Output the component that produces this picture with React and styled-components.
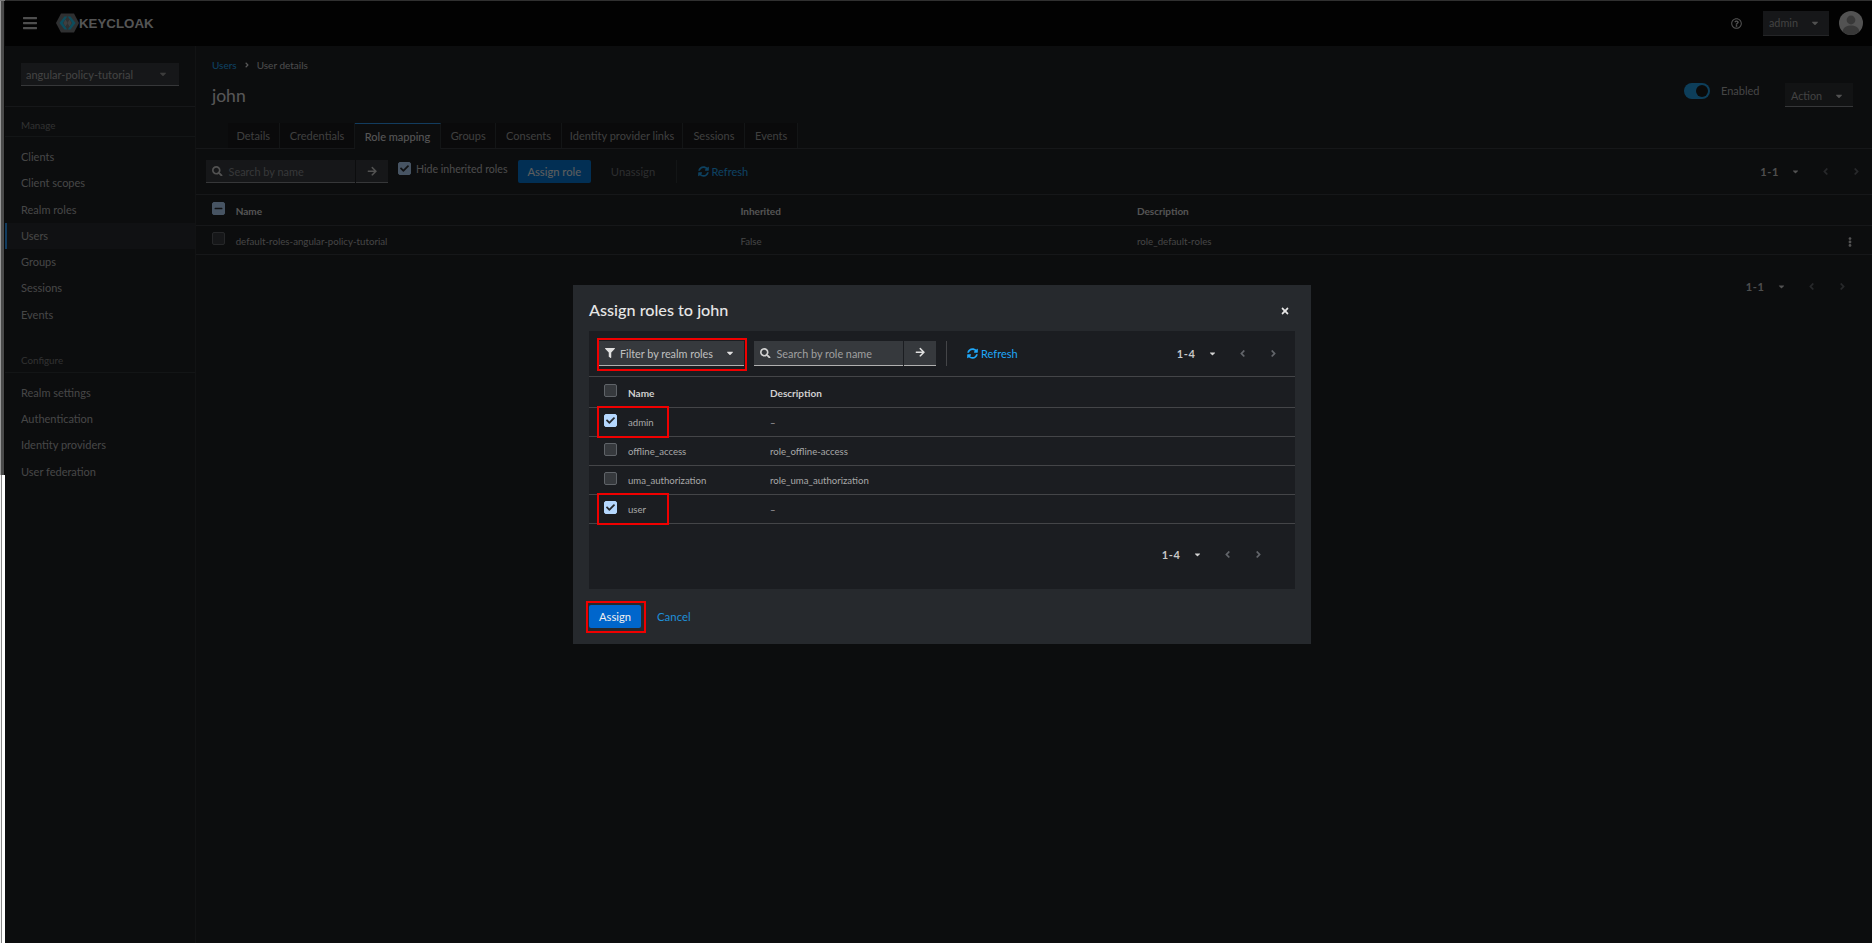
import React from "react";
import styled, { createGlobalStyle } from "styled-components";
import {
  FaAngleLeft,
  FaAngleRight,
  FaArrowRight,
  FaBars,
  FaCaretDown,
  FaCheck,
  FaEllipsisV,
  FaFilter,
  FaMinus,
  FaRegQuestionCircle,
  FaSearch,
  FaSyncAlt,
  FaTimes,
} from "react-icons/fa";

const manageItems = ["Clients", "Client scopes", "Realm roles", "Users", "Groups", "Sessions", "Events"];
const configureItems = ["Realm settings", "Authentication", "Identity providers", "User federation"];
const tabs = [
  { label: "Details", width: 52.4 },
  { label: "Credentials", width: 75 },
  { label: "Role mapping", width: 86, active: true },
  { label: "Groups", width: 55.4 },
  { label: "Consents", width: 65.3 },
  { label: "Identity provider links", width: 121.8 },
  { label: "Sessions", width: 62 },
  { label: "Events", width: 52.5 },
];
const roles = [
  { name: "admin", description: "–", checked: true },
  { name: "offline_access", description: "role_offline-access" },
  { name: "uma_authorization", description: "role_uma_authorization" },
  { name: "user", description: "–", checked: true },
];

const GlobalStyle = createGlobalStyle`
  html, body {
    margin: 0;
    padding: 0;
    height: 100%;
    overflow: hidden;
    background: #030303;
  }
  body {
    font-family: Lato, "Noto Sans", "Liberation Sans", sans-serif;
    white-space: nowrap;
  }
  * {
    box-sizing: border-box;
  }
`;

const Page = styled.div`
  display: flex;
  width: 1872px;
  height: 943px;
`;

const Edge = styled.div`
  width: 5px;
  display: flex;
  flex-direction: column;
`;

const EdgeTop = styled.div`
  height: 475px;
  background: #4b4b4b;
  border-left: 1px solid #9a9a9a;
  border-right: 1px solid #0a0a0a;
`;

const EdgeBottom = styled.div`
  flex: 1;
  background: #ffffff;
  border-left: 1px solid #f5f5f5;
  box-shadow: inset 2px 0 0 -1px #8a8a8a;
`;

const Shell = styled.div`
  flex: 1;
  position: relative;
  display: flex;
  flex-direction: column;
  min-width: 0;
  background: #1b1d21;
  color: #e0e0e0;
`;

const TopLine = styled.div`
  height: 1px;
  background: #7a7a7a;
  position: absolute;
  top: 0;
  left: -5px;
  right: 0;
  z-index: 5;
`;

const Masthead = styled.header`
  height: 46px;
  background: #000;
  display: flex;
  align-items: center;
  padding-left: 17px;
  padding-right: 9px;
`;

const Burger = styled.span`
  display: flex;
  font-size: 16px;
  color: #c7c7c7;
  margin-right: 18px;
`;

const Brand = styled.span`
  display: flex;
  align-items: center;
`;

const BrandName = styled.span`
  font-family: "Liberation Sans", sans-serif;
  font-weight: 700;
  font-size: 13.3px;
  color: #d8d8d8;
`;

const MastTools = styled.div`
  margin-left: auto;
  display: flex;
  align-items: center;
`;

const HelpIcon = styled.span`
  display: flex;
  font-size: 11px;
  color: #d2d2d2;
  margin-right: 21px;
`;

const UserMenu = styled.div`
  width: 66px;
  height: 25px;
  background: #36393d;
  border-bottom: 1px solid #5a5d61;
  display: flex;
  align-items: center;
  padding-left: 6px;
  font-size: 10.8px;
  color: #a8a8a8;
  margin-right: 10px;

  svg {
    margin-left: 12px;
    font-size: 10px;
    color: #d0d0d0;
  }
`;

const Avatar = styled.svg`
  width: 24px;
  height: 24px;
`;

const Body = styled.div`
  flex: 1;
  display: flex;
  min-height: 0;
`;

const Sidebar = styled.aside`
  width: 191px;
  border-right: 1px solid #2a2d31;
  flex-shrink: 0;
`;

const RealmBox = styled.div`
  height: 61px;
  padding: 17px 16px 0;
  border-bottom: 1px solid #36393d;
`;

const RealmSelect = styled.div`
  height: 23px;
  background: #36393d;
  border-bottom: 1px solid #8a8d90;
  display: flex;
  align-items: center;
  justify-content: space-between;
  padding: 0 11px 0 5px;
  font-size: 11px;
  color: #acacac;

  svg {
    font-size: 10px;
    color: #9a9a9a;
  }
`;

const NavTitle = styled.div`
  height: 30px;
  margin-top: ${({ $first }) => ($first ? "0" : "15px")};
  padding: ${({ $first }) => ($first ? "12px" : "11px")} 16px 0;
  border-bottom: 1px solid #2f3236;
  font-size: 9.8px;
  line-height: 13px;
  color: #7d7d7d;
`;

const NavList = styled.div`
  padding-top: 7px;
`;

const NavItem = styled.div`
  height: 26.25px;
  line-height: 26px;
  padding-left: 16px;
  font-size: 11px;
  color: #b4b4b4;
  background: ${({ $active }) => ($active ? "#26292d" : "transparent")};
  box-shadow: ${({ $active }) => ($active ? "inset 2px 0 0 #2b9af3" : "none")};
`;

const Main = styled.main`
  flex: 1;
  min-width: 0;
`;

const PageHead = styled.div`
  padding: 11px 19px 0 16px;
`;

const Breadcrumb = styled.nav`
  height: 16px;
  display: flex;
  align-items: center;
  font-size: 10px;
  color: #c4c4c4;

  svg {
    font-size: 8px;
    margin: 0 6px;
    color: #e0e0e0;
  }
`;

const BreadLink = styled.span`
  color: #1fa7f8;
`;

const TitleRow = styled.div`
  margin-top: 10px;
  height: 24px;
  display: flex;
  justify-content: space-between;
  align-items: flex-start;
`;

const UserName = styled.h1`
  margin: 0;
  font-size: 17.5px;
  font-weight: 400;
  line-height: 26px;
  color: #e0e0e0;
`;

const HeadActions = styled.div`
  display: flex;
  align-items: flex-start;
`;

const Toggle = styled.span`
  width: 26px;
  height: 16px;
  border-radius: 8px;
  background: #1f9fe8;
  position: relative;
  margin-right: 11px;

  &::after {
    content: "";
    position: absolute;
    right: 2px;
    top: 2px;
    width: 12px;
    height: 12px;
    border-radius: 50%;
    background: #151515;
  }
`;

const ToggleLabel = styled.span`
  font-size: 11px;
  line-height: 16px;
  color: #b0b0b0;
  width: 64px;
`;

const ActionSelect = styled.div`
  width: 68px;
  height: 24px;
  background: #2a2d31;
  border-bottom: 1px solid #8a8d90;
  display: flex;
  align-items: center;
  padding: 2px 0 0 6px;
  font-size: 10.8px;
  color: #a8a8a8;

  svg {
    margin-left: 12px;
    font-size: 10px;
    color: #d0d0d0;
  }
`;

const Tabs = styled.div`
  margin-top: 16px;
  padding-left: 31.6px;
  height: 26px;
  display: flex;
  border-bottom: 1px solid #36393d;
`;

const Tab = styled.div`
  height: ${({ $active }) => ($active ? "26px" : "25px")};
  text-align: center;
  line-height: 25px;
  font-size: 11px;
  color: ${({ $active }) => ($active ? "#e0e0e0" : "#a0a0a0")};
  background: ${({ $active }) => ($active ? "#1b1d21" : "#151618")};
  border-right: 1px solid #2f3236;
  border-top: ${({ $active }) => ($active ? "1px solid #2b9af3" : "none")};
`;

const Toolbar = styled.div`
  height: 46px;
  display: flex;
  align-items: center;
  padding-left: 10px;
  border-bottom: 1px solid #36393d;
`;

const SearchBox = styled.div`
  width: 149px;
  height: 23px;
  background: #36393d;
  border-bottom: 1px solid #8a8d90;
  display: flex;
  align-items: center;
  padding-left: 6px;
  font-size: 10.9px;
  color: #8a8d90;

  svg {
    font-size: 10.5px;
    color: #d2d2d2;
    margin-right: 6px;
  }
`;

const SearchGo = styled.div`
  width: 32px;
  height: 23px;
  margin-left: 1px;
  background: #36393d;
  border-bottom: 1px solid #8a8d90;
  display: flex;
  align-items: center;
  justify-content: center;
  font-size: 10.5px;
  color: #d2d2d2;
`;

const Box = styled.span`
  width: 13px;
  height: 13px;
  flex-shrink: 0;
  border-radius: 2px;
  display: flex;
  align-items: center;
  justify-content: center;
  background: ${({ $on }) => ($on ? "#b5d8ff" : "#36393d")};
  border: 1px solid ${({ $on }) => ($on ? "#b5d8ff" : "#5f6368")};
  color: #26292d;
  font-size: 9px;
  margin-bottom: 3px;
`;

const HideInherited = styled.label`
  width: 110px;
  display: flex;
  align-items: flex-start;
  margin-left: 10px;
  margin-top: -5px;
  font-size: 10.6px;
  line-height: 15px;
  color: #c0c0c0;

  ${Box} {
    margin: 0 5px 0 0;
  }
`;

const PrimaryButton = styled.button`
  height: 23px;
  width: ${({ $width }) => $width}px;
  margin-left: ${({ $gap }) => $gap || 0}px;
  border: none;
  border-radius: 2px;
  padding: 0;
  background: ${({ $bright }) => ($bright ? "#0066cc" : "#0078d8")};
  color: #f0f0f0;
  font-family: inherit;
  font-size: 11.2px;
`;

const GhostButton = styled.button`
  height: 23px;
  width: 65px;
  margin-left: 10px;
  border: none;
  background: transparent;
  padding: 0;
  color: #6f7276;
  font-family: inherit;
  font-size: 11.2px;
`;

const VLine = styled.span`
  width: 1px;
  height: ${({ $tall }) => ($tall ? "25px" : "23px")};
  background: ${({ $tall }) => ($tall ? "#444548" : "#2f3236")};
  margin-left: 10px;
`;

const RefreshLink = styled.span`
  display: flex;
  align-items: center;
  gap: 3px;
  height: 25px;
  margin-left: ${({ $gap }) => $gap}px;
  font-size: 11px;
  color: #1fa7f8;

  svg {
    font-size: 11px;
  }
`;

const Pager = styled.div`
  margin-left: auto;
  padding-right: ${({ $right }) => $right || 0}px;
  display: flex;
  align-items: center;
  font-size: 11px;
  font-weight: 700;
  color: #c8c8c8;
`;

const PagerRange = styled.span`
  letter-spacing: 0.6px;
  margin-right: 12px;
`;

const PagerCaret = styled.span`
  display: flex;
  font-size: 9px;
  color: #d2d2d2;
  margin-right: 10px;
`;

const PagerArrow = styled.span`
  display: flex;
  justify-content: center;
  width: 31px;
  font-size: 11px;
  color: #62656a;
`;

const RoleRow = styled.div`
  display: grid;
  grid-template-columns: 23.7px 504.7px 396.6px 1fr 27px;
  align-items: center;
  height: ${({ $h }) => $h}px;
  padding-left: 16px;
  border-bottom: 1px solid #36393d;
  font-size: ${({ $head }) => ($head ? "10px" : "9.7px")};
  font-weight: ${({ $head }) => ($head ? 700 : 400)};
  color: ${({ $head }) => ($head ? "#d8d8d8" : "#b0b0b0")};
`;

const Cell = styled.span`
  margin-top: 2px;
`;

const Kebab = styled.span`
  display: flex;
  font-size: 10px;
  color: #d2d2d2;
  margin-top: 3px;
`;

const BottomPager = styled.div`
  display: flex;
  height: 62px;
`;

const Backdrop = styled.div`
  position: absolute;
  inset: 0;
  z-index: 10;
  background: rgba(3, 3, 3, 0.62);
  display: flex;
  align-items: center;
  justify-content: center;
  padding: 0 0 15px 7px;
`;

const Modal = styled.section`
  width: 738px;
  height: 359px;
  background: #26292d;
  padding: 0 16px 16px;
  display: flex;
  flex-direction: column;
`;

const ModalHead = styled.div`
  height: 46px;
  padding-top: 3px;
  display: flex;
  align-items: center;
  justify-content: space-between;
`;

const ModalTitle = styled.h2`
  margin: 0;
  font-size: 16.2px;
  font-weight: 500;
  color: #e6e6e6;
`;

const CloseIcon = styled.span`
  display: flex;
  font-size: 10px;
  color: #e6e6e6;
  margin: 4px 5px 0 0;
`;

const Panel = styled.div`
  height: 258px;
  background: #1b1d21;
`;

const ModalToolbar = styled.div`
  height: 46px;
  display: flex;
  align-items: flex-start;
  padding-top: 10px;
  padding-left: 10px;
  border-bottom: 1px solid #444548;
`;

const FilterWrap = styled.div`
  position: relative;
`;

const FilterSelect = styled.div`
  width: 145px;
  height: 25px;
  background: #36393d;
  border-bottom: 1px solid #b0b0b0;
  display: flex;
  align-items: center;
  padding: 1px 0 0 6px;
  font-size: 10.8px;
  color: #c0c0c0;

  svg:first-child {
    font-size: 10px;
    color: #e0e0e0;
    margin-right: 5px;
  }
  svg:last-child {
    font-size: 10px;
    color: #e0e0e0;
    margin-left: 12px;
  }
`;

const RoleSearch = styled(SearchBox)`
  height: 25px;
  margin-left: 10px;
  padding-top: 1px;
  border-bottom-color: #b0b0b0;
  font-size: 10.8px;
  color: #a0a0a0;
`;

const RoleSearchGo = styled(SearchGo)`
  height: 25px;
  border-bottom-color: #b0b0b0;
  color: #e0e0e0;
`;

const ToolPager = styled(Pager)`
  height: 25px;
`;

const ModalRow = styled.div`
  position: relative;
  display: grid;
  grid-template-columns: 24px 142px 1fr;
  align-items: center;
  height: ${({ $h }) => $h}px;
  padding-left: 15px;
  border-bottom: 1px solid #444548;
  font-size: ${({ $head }) => ($head ? "10px" : "9.6px")};
  font-weight: ${({ $head }) => ($head ? 700 : 400)};
  color: ${({ $head }) => ($head ? "#d0d0d0" : "#a8a8a8")};
`;

const ModalPager = styled.div`
  display: flex;
  padding-top: 24px;
`;

const Highlight = styled.span`
  position: absolute;
  top: ${({ $t }) => $t}px;
  left: ${({ $l }) => $l}px;
  right: ${({ $r }) => ($r === undefined ? "auto" : `${$r}px`)};
  bottom: ${({ $b }) => ($b === undefined ? "auto" : `${$b}px`)};
  width: ${({ $w }) => ($w ? `${$w}px` : "auto")};
  height: ${({ $h }) => ($h ? `${$h}px` : "auto")};
  border: 2px solid #f00000;
  pointer-events: none;
`;

const ModalFoot = styled.div`
  margin-top: 16px;
  display: flex;
  align-items: center;
`;

const AssignWrap = styled.div`
  position: relative;
  display: flex;
`;

const CancelLink = styled.span`
  margin-left: 16px;
  font-size: 11.4px;
  color: #1f8fd8;
`;

const Logo = () => (
  <svg width="23" height="20" viewBox="0 0 23 20">
    <path d="M0 10L5 .5h13L23 10l-5 9.5H5z" fill="#77797c" />
    <path d="M8.500 3.500L3.500 10l5 6.500h2.700L6.800 10l4.400-6.500z" fill="#1cc4ee" />
    <path d="M14.500 3.500L19.500 10l-5 6.500h-2.700l4.400-6.500-4.400-6.500z" fill="#1cc4ee" />
    <path d="M9.500 6.500L7.500 10l2 3.500 2-3.500zM13.500 6.500L11.500 10l2 3.500 2-3.500z" fill="#e8f6fa" opacity=".35" />
  </svg>
);

const Pagination = ({ range }) => (
  <>
    <PagerRange>{range}</PagerRange>
    <PagerCaret>
      <FaCaretDown />
    </PagerCaret>
    <PagerArrow>
      <FaAngleLeft />
    </PagerArrow>
    <PagerArrow>
      <FaAngleRight />
    </PagerArrow>
  </>
);

const App = () => {
  return (
    <>
      <GlobalStyle />
      <Page>
        <Edge>
          <EdgeTop />
          <EdgeBottom />
        </Edge>
        <Shell>
          <TopLine />
          <Masthead>
            <Burger>
              <FaBars />
            </Burger>
            <Brand>
              <Logo />
              <BrandName>KEYCLOAK</BrandName>
            </Brand>
            <MastTools>
              <HelpIcon>
                <FaRegQuestionCircle />
              </HelpIcon>
              <UserMenu>
                admin
                <FaCaretDown />
              </UserMenu>
              <Avatar viewBox="0 0 24 24">
                <circle cx="12" cy="12" r="12" fill="#d2d2d2" />
                <circle cx="12" cy="9" r="4.4" fill="#8f8f8f" />
                <path d="M3.6 20.5C4.5 16 8 14.6 12 14.6s7.500 1.400 8.400 5.900A12 12 0 0 1 3.600 20.500z" fill="#8f8f8f" />
              </Avatar>
            </MastTools>
          </Masthead>
          <Body>
            <Sidebar>
              <RealmBox>
                <RealmSelect>
                  angular-policy-tutorial
                  <FaCaretDown />
                </RealmSelect>
              </RealmBox>
              <NavTitle $first>Manage</NavTitle>
              <NavList>
                {manageItems.map((item) => (
                  <NavItem key={item} $active={item === "Users"}>
                    {item}
                  </NavItem>
                ))}
              </NavList>
              <NavTitle>Configure</NavTitle>
              <NavList>
                {configureItems.map((item) => (
                  <NavItem key={item}>{item}</NavItem>
                ))}
              </NavList>
            </Sidebar>
            <Main>
              <PageHead>
                <Breadcrumb>
                  <BreadLink>Users</BreadLink>
                  <FaAngleRight />
                  User details
                </Breadcrumb>
                <TitleRow>
                  <UserName>john</UserName>
                  <HeadActions>
                    <Toggle />
                    <ToggleLabel>Enabled</ToggleLabel>
                    <ActionSelect>
                      Action
                      <FaCaretDown />
                    </ActionSelect>
                  </HeadActions>
                </TitleRow>
              </PageHead>
              <Tabs>
                {tabs.map((tab) => (
                  <Tab key={tab.label} $active={tab.active} style={{ width: tab.width }}>
                    {tab.label}
                  </Tab>
                ))}
              </Tabs>
              <Toolbar>
                <SearchBox>
                  <FaSearch />
                  Search by name
                </SearchBox>
                <SearchGo>
                  <FaArrowRight />
                </SearchGo>
                <HideInherited>
                  <Box $on>
                    <FaCheck />
                  </Box>
                  Hide inherited roles
                </HideInherited>
                <PrimaryButton $width={72.5} $gap={10}>
                  Assign role
                </PrimaryButton>
                <GhostButton>Unassign</GhostButton>
                <VLine />
                <RefreshLink $gap={21}>
                  <FaSyncAlt />
                  Refresh
                </RefreshLink>
                <Pager>
                  <Pagination range="1-1" />
                </Pager>
              </Toolbar>
              <RoleRow $head $h={31}>
                <Box $on>
                  <FaMinus />
                </Box>
                <Cell>Name</Cell>
                <Cell>Inherited</Cell>
                <Cell>Description</Cell>
              </RoleRow>
              <RoleRow $h={29}>
                <Box />
                <Cell>default-roles-angular-policy-tutorial</Cell>
                <Cell>False</Cell>
                <Cell>role_default-roles</Cell>
                <Kebab>
                  <FaEllipsisV />
                </Kebab>
              </RoleRow>
              <BottomPager>
                <Pager $right={14.5}>
                  <Pagination range="1-1" />
                </Pager>
              </BottomPager>
            </Main>
          </Body>
          <Backdrop>
            <Modal>
              <ModalHead>
                <ModalTitle>Assign roles to john</ModalTitle>
                <CloseIcon>
                  <FaTimes />
                </CloseIcon>
              </ModalHead>
              <Panel>
                <ModalToolbar>
                  <FilterWrap>
                    <FilterSelect>
                      <FaFilter />
                      Filter by realm roles
                      <FaCaretDown />
                    </FilterSelect>
                    <Highlight $t={-3} $l={-2} $r={-3} $b={-5} />
                  </FilterWrap>
                  <RoleSearch>
                    <FaSearch />
                    Search by role name
                  </RoleSearch>
                  <RoleSearchGo>
                    <FaArrowRight />
                  </RoleSearchGo>
                  <VLine $tall />
                  <RefreshLink $gap={20}>
                    <FaSyncAlt />
                    Refresh
                  </RefreshLink>
                  <ToolPager $right={6.5}>
                    <Pagination range="1-4" />
                  </ToolPager>
                </ModalToolbar>
                <ModalRow $head $h={31}>
                  <Box />
                  <Cell>Name</Cell>
                  <Cell>Description</Cell>
                </ModalRow>
                {roles.map((role) => (
                  <ModalRow key={role.name} $h={29}>
                    <Box $on={role.checked}>{role.checked && <FaCheck />}</Box>
                    <Cell>{role.name}</Cell>
                    <Cell>{role.description}</Cell>
                    {role.checked && <Highlight $t={-2} $l={8} $w={72} $h={32} />}
                  </ModalRow>
                ))}
                <ModalPager>
                  <Pager $right={21.5}>
                    <Pagination range="1-4" />
                  </Pager>
                </ModalPager>
              </Panel>
              <ModalFoot>
                <AssignWrap>
                  <PrimaryButton $width={52} $bright>
                    Assign
                  </PrimaryButton>
                  <Highlight $t={-4} $l={-3} $r={-5} $b={-5} />
                </AssignWrap>
                <CancelLink>Cancel</CancelLink>
              </ModalFoot>
            </Modal>
          </Backdrop>
        </Shell>
      </Page>
    </>
  );
};

export default App;
